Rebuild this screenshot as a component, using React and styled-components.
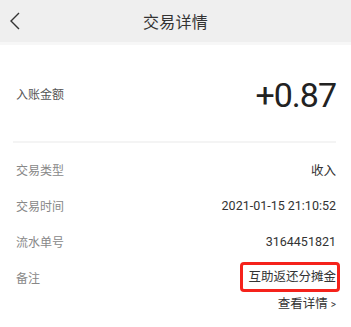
import styled, { createGlobalStyle } from 'styled-components';

const GlobalStyle = createGlobalStyle`
  body {
    margin: 0;
    background: #fff;
    font-family: Roboto, 'Noto Sans CJK SC', sans-serif;
  }
`;

const rows = [
  { label: '交易类型', value: '收入' },
  { label: '交易时间', value: '2021-01-15 21:10:52' },
  { label: '流水单号', value: '3164451821' },
  { label: '备注', value: '互助返还分摊金', marked: true },
];

const App = () => {
  return (
    <Page>
      <GlobalStyle />
      <Header>
        <BackButton>
          <svg width='12' height='18' viewBox='0 0 12 18'>
            <polyline points='10,1 2,9 10,17' fill='none' stroke='#333' strokeWidth='1.4' />
          </svg>
        </BackButton>
        <Title>交易详情</Title>
      </Header>
      <AmountBlock>
        <Label $dark>入账金额</Label>
        <Amount>+0.87</Amount>
      </AmountBlock>
      <Divider />
      <List>
        {rows.map(row => (
          <Row key={row.label}>
            <Label>{row.label}</Label>
            {row.marked ? <Marked>{row.value}</Marked> : <Value>{row.value}</Value>}
          </Row>
        ))}
        <More>
          查看详情 <span>&gt;</span>
        </More>
      </List>
    </Page>
  );
};

const Page = styled.div`
  width: 351px;
  min-height: 327px;
  background: #fff;
`;

const Header = styled.div`
  position: relative;
  height: 42px;
  display: flex;
  align-items: center;
  justify-content: center;
  background: #efefef;
  border-bottom: 3px solid #f7f7f7;
`;

const BackButton = styled.div`
  position: absolute;
  left: 9px;
  top: 12px;
  display: flex;
`;

const Title = styled.span`
  font-size: 16px;
  color: #333;
  letter-spacing: 0.3px;
`;

const AmountBlock = styled.div`
  height: 96px;
  display: flex;
  align-items: center;
  justify-content: space-between;
  padding: 0 15px 0 16px;
`;

const Label = styled.span`
  font-size: 12px;
  color: ${props => (props.$dark ? '#555' : '#888')};
`;

const Amount = styled.span`
  font-size: 34px;
  font-weight: 400;
  letter-spacing: -1px;
  color: #222;
  margin-top: 4px;
`;

const Divider = styled.div`
  height: 2px;
  margin: 0 15px 0 13px;
  background: #f4f4f4;
`;

const List = styled.div`
  padding: 8px 15px 0 16px;
  display: flex;
  flex-direction: column;
`;

const Row = styled.div`
  height: 36px;
  display: flex;
  align-items: center;
  justify-content: space-between;
`;

const Value = styled.span`
  font-size: 12.5px;
  color: #333;
`;

const Marked = styled(Value)`
  border: 3px solid #f5221b;
  border-radius: 4px;
  padding: 3px 1px 3px 5px;
  margin-right: -4px;
  line-height: 18px;
`;

const More = styled.div`
  align-self: flex-end;
  height: 16px;
  line-height: 16px;
  margin-top: 1px;
  font-size: 12.5px;
  color: #333;
  span {
    font-size: 10px;
  }
`;

export default App;
